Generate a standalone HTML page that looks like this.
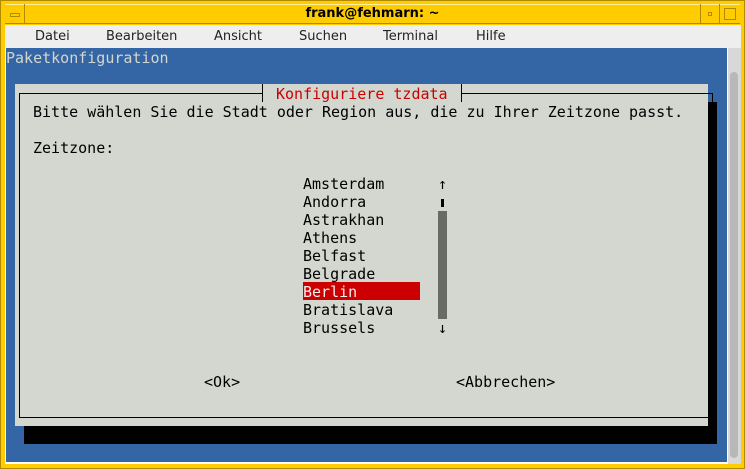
<!DOCTYPE html>
<html><head><meta charset="utf-8"><style>
*{margin:0;padding:0;box-sizing:border-box}
body{width:745px;height:469px;overflow:hidden;background:#ffcc00;position:relative;font-family:"DejaVu Sans Mono","Liberation Mono",monospace}
.a{position:absolute}
.t{position:absolute;font-size:15px;line-height:18px;white-space:pre;font-family:"DejaVu Sans Mono",monospace;margin-top:1px}
.m{position:absolute;top:29px;font:13px "DejaVu Sans","Liberation Sans",sans-serif;color:#222}
</style></head><body>
<div class="a" style="left:0;top:0;width:745px;height:469px;border:1px solid #b08a00"></div>
<div class="a" style="left:5px;top:4px;width:735px;height:20px;border-top:1px solid #fff0a0;border-bottom:1px solid #b08a00"></div>
<div class="a" style="left:5px;top:4px;width:20px;height:20px;border-right:1px solid #b08a00"></div>
<div class="a" style="left:10px;top:13px;width:10px;height:4px;border:1px solid #b08a00"></div>
<div class="a" style="left:700px;top:4px;width:20px;height:20px;border-left:1px solid #b08a00;border-right:1px solid #b08a00"></div>
<div class="a" style="left:708px;top:12px;width:4px;height:4px;border:1px solid #b08a00"></div>
<div class="a" style="left:724px;top:8px;width:12px;height:12px;border:1px solid #b08a00"></div>
<div class="a" style="left:0;top:6px;width:745px;text-align:center;font:bold 13px 'DejaVu Sans','Liberation Sans',sans-serif;color:#000">frank@fehmarn: ~</div>
<div class="a" style="left:5px;top:25px;width:736px;height:23px;background:#eeeeee"></div>
<div class="m" style="left:35px">Datei</div>
<div class="m" style="left:106px">Bearbeiten</div>
<div class="m" style="left:214px">Ansicht</div>
<div class="m" style="left:299px">Suchen</div>
<div class="m" style="left:383px">Terminal</div>
<div class="m" style="left:476px">Hilfe</div>
<div class="a" style="left:5px;top:48px;width:736px;height:416px;background:#fff"></div>
<div class="a" style="left:6px;top:48px;width:721px;height:414px;background:#3465a4"></div>
<div class="a" style="left:728px;top:48px;width:13px;height:416px;background:#d8d8d8"></div>
<div class="a" style="left:730px;top:72px;width:8px;height:386px;background:#b8b8b8;border-radius:4px"></div>
<div class="t" style="left:6px;top:48px;color:#d3d7cf">Paketkonfiguration</div>
<div class="a" style="left:24px;top:102px;width:693px;height:342px;background:#000"></div>
<div class="a" style="left:15px;top:84px;width:693px;height:342px;background:#d3d7cf"></div>
<div class="a" style="left:19px;top:93px;width:694px;height:325px;border:1px solid #000;border-top:0"></div>
<div class="a" style="left:19px;top:93px;width:244px;height:1px;background:#000"></div>
<div class="a" style="left:461px;top:93px;width:252px;height:1px;background:#000"></div>
<div class="a" style="left:262px;top:84px;width:1px;height:18px;background:#000"></div>
<div class="a" style="left:461px;top:84px;width:1px;height:18px;background:#000"></div>
<div class="t" style="left:276px;top:84px;color:#cc0000">Konfiguriere tzdata</div>
<div class="t" style="left:33px;top:102px;color:#000">Bitte wählen Sie die Stadt oder Region aus, die zu Ihrer Zeitzone passt.</div>
<div class="t" style="left:33px;top:138px;color:#000">Zeitzone:</div>
<div class="a" style="left:303px;top:282px;width:117px;height:18px;background:#cc0000"></div>
<div class="t" style="left:303px;top:174px;color:#000">Amsterdam
Andorra
Astrakhan
Athens
Belfast
Belgrade
<span style="color:#eeeeec">Berlin</span>
Bratislava
Brussels</div>
<div class="t" style="left:438px;top:174px;color:#000">↑</div>
<div class="t" style="left:438px;top:318px;color:#000">↓</div>
<div class="a" style="left:441px;top:199px;width:3px;height:8px;background:#000"></div>
<div class="a" style="left:438px;top:211px;width:9px;height:108px;background:#686a66"></div>
<div class="t" style="left:204px;top:372px;color:#000">&lt;Ok&gt;</div>
<div class="t" style="left:456px;top:372px;color:#000">&lt;Abbrechen&gt;</div>
</body></html>
